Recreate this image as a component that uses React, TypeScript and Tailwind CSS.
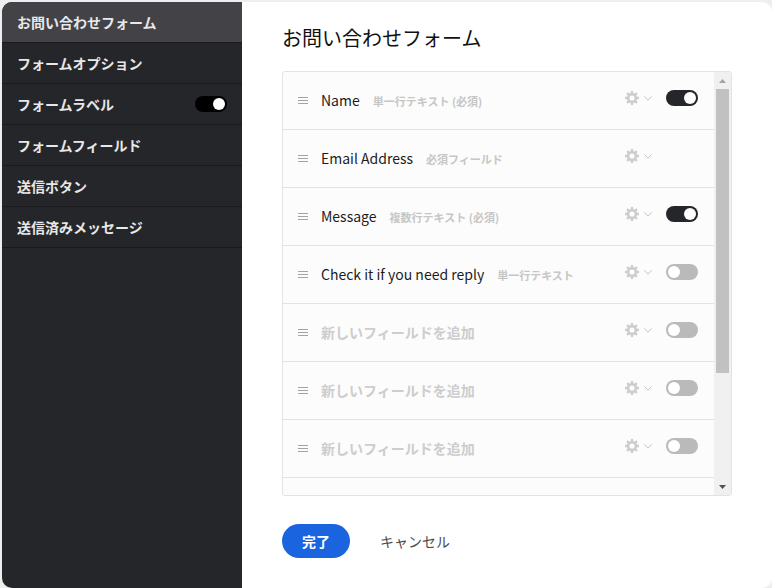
import { useState } from "react"
import { clsx } from "clsx"

type Field = {
  id: string
  name?: string
  hint?: string
  toggle?: boolean
  enabled?: boolean
}

const menuItems = [
  { id: "form", label: "お問い合わせフォーム" },
  { id: "options", label: "フォームオプション" },
  { id: "labels", label: "フォームラベル", toggle: true },
  { id: "fields", label: "フォームフィールド" },
  { id: "submit", label: "送信ボタン" },
  { id: "sent", label: "送信済みメッセージ" },
]

const fields: Field[] = [
  { id: "name", name: "Name", hint: "単一行テキスト (必須)", toggle: true, enabled: true },
  { id: "email", name: "Email Address", hint: "必須フィールド" },
  { id: "message", name: "Message", hint: "複数行テキスト (必須)", toggle: true, enabled: true },
  { id: "reply", name: "Check it if you need reply", hint: "単一行テキスト", toggle: true },
  { id: "new1", toggle: true },
  { id: "new2", toggle: true },
  { id: "new3", toggle: true },
  { id: "new4", toggle: true },
]

const App = () => {
  const [active, setActive] = useState("form")

  return (
    <div className="h-screen bg-[#eeeeee] pt-0.5 pl-0.5 font-['Noto_Sans_CJK_JP',sans-serif]">
      <div className="flex h-full overflow-hidden rounded-[10px] bg-white">
        <nav className="w-60 shrink-0 bg-[#25262a]">
          {menuItems.map((item) => (
            <div
              key={item.id}
              className={clsx(
                "flex items-center border-b border-[#1a1a1e] pr-[15px]",
                active === item.id && "bg-[#434247]"
              )}
            >
              <button
                type="button"
                className="h-10 flex-1 pl-[15px] text-left text-sm font-bold text-[#e8e8e8]"
                onClick={() => setActive(item.id)}
              >
                {item.label}
              </button>
              {item.toggle && <Toggle label={item.label} defaultChecked color="checked:bg-black" />}
            </div>
          ))}
        </nav>

        <main className="flex min-w-0 flex-1 flex-col px-10 pt-5 pb-[30px]">
          <h1 className="mb-[17px] text-xl leading-8 text-[#111111]">お問い合わせフォーム</h1>
          <div className="flex min-h-0 flex-1 overflow-hidden rounded-[3px] border border-[#e3e3e3] bg-[#fcfcfc]">
            <ul className="min-w-0 flex-1 overflow-hidden">
              {fields.map((field) => (
                <FieldRow key={field.id} field={field} />
              ))}
            </ul>
            <Scrollbar />
          </div>
          <div className="mt-7 flex items-center gap-[30px]">
            <button
              type="button"
              className="h-[34px] rounded-full bg-[#1b64e0] px-5 text-sm font-bold text-white"
            >
              完了
            </button>
            <button type="button" className="text-sm text-[#4b4b4b]">
              キャンセル
            </button>
          </div>
        </main>
      </div>
    </div>
  )
}

const FieldRow = ({ field }: { field: Field }) => {
  return (
    <li className="flex h-[58px] items-center border-b border-[#e3e3e3] pr-4 pl-[15px]">
      <svg width="10" height="7" viewBox="0 0 10 7" className="shrink-0" aria-hidden="true">
        <path d="M0 .5h10M0 3.5h10M0 6.5h10" stroke="#a3a3a3" />
      </svg>
      <div className="ml-[13px] flex min-w-0 flex-1 items-baseline gap-[13px] pb-0.5">
        {field.name ? (
          <>
            <span className="text-sm text-[#1c1c1c]">{field.name}</span>
            <span className="text-[11px] font-bold text-[#c6c6c6]">{field.hint}</span>
          </>
        ) : (
          <input
            type="text"
            aria-label="新しいフィールドを追加"
            placeholder="新しいフィールドを追加"
            className="h-5 w-full text-sm font-bold text-[#1c1c1c] outline-none placeholder:text-[#cdcdcd]"
          />
        )}
      </div>
      <div className="flex shrink-0 items-center pb-1.5">
        <button type="button" aria-label="設定" className="flex items-center gap-[5px]">
          <GearIcon />
          <svg width="8" height="6" viewBox="0 0 8 6" fill="none" stroke="#c4c4c4" aria-hidden="true">
            <path d="M.3 1.3 4 5.2 7.7 1.3" />
          </svg>
        </button>
        <div className="ml-3.5 flex w-8">
          {field.toggle && (
            <Toggle
              label={field.name || "新しいフィールド"}
              defaultChecked={field.enabled}
              color="checked:bg-[#25262a]"
            />
          )}
        </div>
      </div>
    </li>
  )
}

type ToggleProps = {
  label: string
  defaultChecked?: boolean
  color: string
}

const Toggle = ({ label, defaultChecked, color }: ToggleProps) => {
  return (
    <input
      type="checkbox"
      role="switch"
      aria-label={label}
      defaultChecked={defaultChecked}
      className={clsx(
        "flex h-4 w-8 shrink-0 appearance-none rounded-full bg-[#bababa] p-0.5",
        "before:size-3 before:rounded-full before:bg-white checked:justify-end",
        color
      )}
    />
  )
}

const GearIcon = () => {
  return (
    <svg width="14" height="14" viewBox="0 0 14 14" fill="none" stroke="#cdcdcd" aria-hidden="true">
      <circle cx="7" cy="7" r="3.9" strokeWidth="2.6" />
      <path
        d="M7 0v2.4M7 11.6V14M0 7h2.4M11.6 7H14M2.05 2.05l1.7 1.7M10.25 10.25l1.7 1.7M2.05 11.95l1.7-1.7M10.25 3.75l1.7-1.7"
        strokeWidth="2.4"
      />
    </svg>
  )
}

const Scrollbar = () => {
  return (
    <div className="flex w-[17px] shrink-0 flex-col items-center bg-[#f0f0f0]" aria-hidden="true">
      <div className="flex h-[17px] items-center">
        <svg width="7" height="4" viewBox="0 0 7 4" fill="#a3a3a3">
          <path d="M3.5 0 7 4H0z" />
        </svg>
      </div>
      <div className="flex w-full flex-1 flex-col px-0.5">
        <div className="h-[73%] bg-[#c1c1c1]" />
      </div>
      <div className="flex h-[17px] items-center">
        <svg width="7" height="4" viewBox="0 0 7 4" fill="#505050">
          <path d="M0 0h7L3.5 4z" />
        </svg>
      </div>
    </div>
  )
}

export default App
